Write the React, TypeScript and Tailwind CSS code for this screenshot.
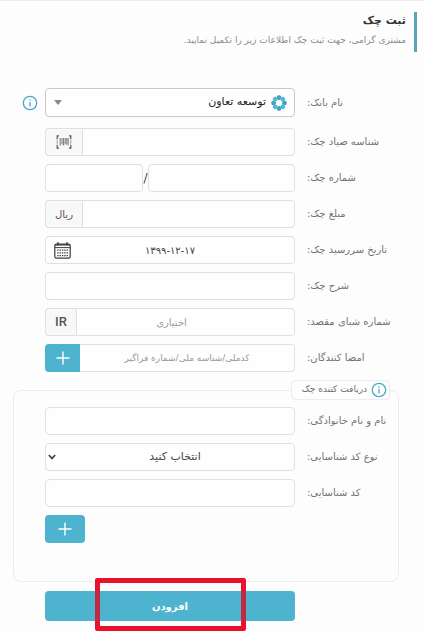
import type { ReactNode } from "react";

const field =
  "h-7 w-full min-w-0 rounded border border-[#e0e0e0] bg-[#fefefe] text-center text-[#444444] outline-none placeholder:text-[#999999] placeholder:opacity-100 focus:border-[#4db3cf]";

function Row({ id, label, children }: { id: string; label: string; children: ReactNode }) {
  return (
    <div className="flex items-center gap-3">
      <label htmlFor={id} className="min-w-0 flex-1 text-end text-[10px] leading-4 whitespace-nowrap text-[#737373]">
        {label}
      </label>
      <div className="relative flex w-[250px] shrink-0 items-center">{children}</div>
    </div>
  );
}

function Addon({ children, className }: { children: ReactNode; className: string }) {
  return (
    <span
      className={`flex h-7 shrink-0 items-center justify-center rounded-l border border-r-0 border-[#e0e0e0] bg-[#f8f8f8] text-[#555555] ${className}`}
    >
      {children}
    </span>
  );
}

function InfoIcon() {
  return (
    <svg viewBox="0 0 16 16" className="size-4" fill="none" stroke="#4aa9c8" aria-hidden="true">
      <circle cx="8" cy="8" r="6.7" strokeWidth="1.3" />
      <path d="M8 7v4.5M8 4.4v1.4" strokeWidth="1.3" />
    </svg>
  );
}

function PlusIcon() {
  return (
    <svg viewBox="0 0 14 14" className="size-3.5" fill="none" stroke="white" strokeWidth="1.4" aria-hidden="true">
      <path d="M7 .5v13M.5 7h13" />
    </svg>
  );
}

function BankLogo() {
  return (
    <svg viewBox="0 0 16 16" className="size-4" aria-hidden="true">
      {[0, 45, 90, 135, 180, 225, 270, 315].map((angle) => (
        <path
          key={angle}
          d="M8 5.2 5.7 3.9 6 .9 8 .1 10 .9 10.3 3.9Z"
          fill={angle % 90 === 0 ? "#3fa2c6" : "#55b9d4"}
          transform={`rotate(${angle} 8 8)`}
        />
      ))}
    </svg>
  );
}

function BarcodeIcon() {
  return (
    <svg viewBox="0 0 16 14" className="h-3.5 w-4" fill="none" stroke="#555555" aria-hidden="true">
      <path d="M3 .8H1.2v3.4M13 .8h1.8v3.4M3 13.2H1.2V9.8M13 13.2h1.8V9.8" strokeWidth="1.2" />
      <path d="M1.2 5.2v3.6M14.8 5.2v3.6" strokeWidth=".6" />
      <path d="M4.2 3v7.5M6 3v6.5M7.6 3v7.5M9.2 3v6.5M10.8 3v6.5M12.2 3v7.5" strokeWidth=".8" />
    </svg>
  );
}

function CalendarIcon() {
  return (
    <svg viewBox="0 0 17 17" className="size-[17px]" fill="none" stroke="#3d3d3d" aria-hidden="true">
      <rect x=".8" y="2.2" width="15.4" height="14" rx="1.6" strokeWidth="1.2" />
      <path d="M1 5.6h15" strokeWidth="1" />
      <path d="M1 2.9h15" strokeWidth="1.3" />
      <path d="M4 .3v3M13 .3v3" strokeWidth="1.5" />
      <path d="M3.2 8.2h11M3.2 10.9h11M3.2 13.6h11" strokeWidth="1.3" strokeDasharray="1.4 .95" />
    </svg>
  );
}

export default function App() {
  return (
    <main
      dir="rtl"
      className="min-h-screen border-t border-[#eeeeee] bg-[#fdfdfd] pb-2.5 font-['DejaVu_Sans',sans-serif]"
    >
      <header className="mt-[11px] mr-[7px] h-10 border-r-3 border-[#5aa5b8] pr-2">
        <h1 className="text-[11px] leading-[18px] font-bold text-[#333333]">ثبت چک</h1>
        <p className="text-[9px] leading-5 text-[#8c8c8c]">مشتری گرامی، جهت ثبت چک اطلاعات زیر را تکمیل نمایید.</p>
      </header>

      <form className="mt-9" onSubmit={(e) => e.preventDefault()}>
        <div className="flex flex-col gap-2 pl-[45px]">
          <div className="mb-[3px]">
            <Row id="bank" label="نام بانک:">
              <select
                id="bank"
                className="h-[29px] w-full appearance-none rounded border border-[#c9c9c9] bg-[#fefefe] pr-7 pl-6 text-[11px] text-[#222222] outline-none"
              >
                <option>توسعه تعاون</option>
              </select>
              <span className="pointer-events-none absolute right-2">
                <BankLogo />
              </span>
              <svg viewBox="0 0 8 5" className="pointer-events-none absolute left-[9px] h-[5px] w-2" aria-hidden="true">
                <path d="M0 0h8L4 5Z" fill="#888888" />
              </svg>
              <button type="button" aria-label="راهنما" className="absolute -left-[23px]">
                <InfoIcon />
              </button>
            </Row>
          </div>

          <Row id="sayad" label="شناسه صیاد چک:">
            <input id="sayad" className={`${field} rounded-l-none text-[10px]`} />
            <Addon className="w-[37px]">
              <BarcodeIcon />
            </Addon>
          </Row>

          <Row id="number" label="شماره چک:">
            <input id="number" className={`${field} text-[10px]`} />
            <span className="w-[5px] shrink-0 text-center text-[12px] text-[#444444]">/</span>
            <input aria-label="سری چک" className={`${field} max-w-[98px] text-[10px]`} />
          </Row>

          <Row id="amount" label="مبلغ چک:">
            <input id="amount" className={`${field} rounded-l-none text-[10px]`} />
            <Addon className="w-[37px] text-[10px]">ریال</Addon>
          </Row>

          <Row id="due" label="تاریخ سررسید چک:">
            <input id="due" defaultValue="۱۳۹۹-۱۲-۱۷" className={`${field} text-[10px] text-[#222222]`} />
            <button type="button" aria-label="تقویم" className="absolute left-[9px]">
              <CalendarIcon />
            </button>
          </Row>

          <Row id="description" label="شرح چک:">
            <input id="description" className={`${field} text-[10px]`} />
          </Row>

          <Row id="iban" label="شماره شبای مقصد:">
            <input id="iban" placeholder="اختیاری" className={`${field} rounded-l-none pr-7 text-[10px]`} />
            <Addon className="w-[31px] font-['Roboto',sans-serif] text-[13px] font-medium">IR</Addon>
          </Row>

          <Row id="signers" label="امضا کنندگان:">
            <input
              id="signers"
              placeholder="کدملی/شناسه ملی/شماره فراگیر"
              className={`${field} rounded-l-none border-l-0 text-[9px]`}
            />
            <button
              type="button"
              aria-label="افزودن امضا کننده"
              className="flex h-7 w-[35px] shrink-0 items-center justify-center rounded-l bg-[#4db3cf]"
            >
              <PlusIcon />
            </button>
          </Row>
        </div>

        <fieldset className="mt-2 mr-[25px] ml-[13px] min-w-0 rounded-lg border border-[#ececec] pb-[38px] pl-[31px]">
          <legend className="mr-2 flex h-5 items-center gap-1 rounded border border-[#ececec] bg-[#fdfdfd] pr-0.5 pl-2.5 text-[9px] text-[#6c6c6c]">
            <InfoIcon />
            دریافت کننده چک
          </legend>
          <div className="flex flex-col gap-2 pt-[7px]">
            <Row id="fullname" label="نام و نام خانوادگی:">
              <input id="fullname" className={`${field} text-[10px]`} />
            </Row>
            <Row id="idtype" label="نوع کد شناسایی:">
              <select id="idtype" className={`${field} appearance-none pl-2.5 text-[11px]`}>
                <option>انتخاب کنید</option>
              </select>
              <svg
                viewBox="0 0 8 6"
                className="pointer-events-none absolute left-[3px] h-1.5 w-2"
                fill="none"
                stroke="#444444"
                strokeWidth="1.7"
                aria-hidden="true"
              >
                <path d="m.8 1 3.2 3.4L7.2 1" />
              </svg>
            </Row>
            <Row id="idcode" label="کد شناسایی:">
              <input id="idcode" className={`${field} text-[10px]`} />
            </Row>
            <div className="flex justify-end">
              <button
                type="button"
                aria-label="افزودن دریافت کننده"
                className="flex h-7 w-10 items-center justify-center rounded bg-[#4db3cf]"
              >
                <PlusIcon />
              </button>
            </div>
          </div>
        </fieldset>

        <div className="mt-[9px] flex justify-end pl-[45px]">
          <div className="relative w-[250px]">
            <button type="submit" className="h-[30px] w-full rounded bg-[#4db3cf] text-[10px] font-bold text-white">
              افزودن
            </button>
            <div className="pointer-events-none absolute -top-[13px] left-[50px] h-[53px] w-[151px] rounded-xs border-5 border-[#e9112c]">
              <span className="absolute top-2 -left-[5px] h-[30px] w-[5px] bg-[#c12842]" />
              <span className="absolute top-2 -right-[5px] h-[30px] w-[5px] bg-[#c12842]" />
            </div>
          </div>
        </div>
      </form>
    </main>
  );
}
